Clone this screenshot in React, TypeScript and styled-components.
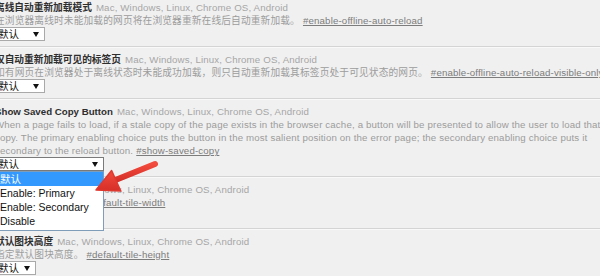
import React from "react";
import styled, { createGlobalStyle } from "styled-components";

const Global = createGlobalStyle`
  html, body { margin: 0; padding: 0; background: #f0f0f0; overflow: hidden; }
  body { width: 600px; height: 276px; }
`;

const Page = styled.div`
  position: relative;
  width: 700px;
  margin: -5px 0 0 -5px;
  font-family: "Liberation Sans", "Noto Sans CJK SC", sans-serif;
  font-size: 9.7px;
  letter-spacing: 0.15px;
  color: #333;
`;

const Experiment = styled.div`
  position: relative;
  padding: 6px 0 5px;
  border-bottom: 1px solid #d4d4d4;
  box-shadow: 0 1px 0 #f9f9f9;
`;

const Line = styled.div`
  line-height: 13px;
  height: 13px;
  white-space: nowrap;
`;

const Name = styled.span`
  font-weight: bold;
  letter-spacing: 0;
  color: #2e2e2e;
`;

const Platforms = styled.span`
  color: #a6a6a6;
  margin-left: 4px;
`;

const Desc = styled(Line)`
  color: #9c9c9c;
`;

const Link = styled.a`
  color: #7c7c7c;
  text-decoration: underline;
  margin-left: 3px;
`;

const SelectBox = styled.div<{ $w: number; $open?: boolean }>`
  box-sizing: border-box;
  width: ${(p) => p.$w}px;
  height: 14px;
  display: flex;
  align-items: center;
  justify-content: space-between;
  padding: 0 5px 0 2px;
  background: #fff;
  border: 1px solid ${(p) => (p.$open ? "#7a7a7a" : "#a9a9a9")};
  font-size: 10.5px;
  letter-spacing: 0;
  color: #111;
  line-height: 12px;
`;

const Arrow = () => (
  <svg width="6" height="5" viewBox="0 0 6 5">
    <polygon points="0,0 6,0 3,5" fill="#111" />
  </svg>
);

const Control = styled.div`
  position: relative;
`;

const OptionList = styled.div`
  position: absolute;
  left: 0;
  top: 14px;
  z-index: 5;
  box-sizing: border-box;
  width: 109px;
  padding-bottom: 2px;
  background: #fff;
  border: 1px solid #7f9db9;
  font-size: 10.5px;
  letter-spacing: 0;
`;

const Option = styled.div<{ $active?: boolean }>`
  height: 14px;
  line-height: 14px;
  padding-left: 4px;
  white-space: nowrap;
  background: ${(p) => (p.$active ? "#3399ff" : "transparent")};
  color: ${(p) => (p.$active ? "#fff" : "#111")};
`;

const Pointer = styled.svg`
  position: absolute;
  left: 0;
  top: 0;
  z-index: 6;
  pointer-events: none;
`;

const PLATFORMS = "Mac, Windows, Linux, Chrome OS, Android";

const Select = ({ w }: { w: number }) => (
  <SelectBox $w={w}>
    <span>默认</span>
    <Arrow />
  </SelectBox>
);

export default function App() {
  return (
    <>
      <Global />
      <Page>
        <Experiment>
          <Line>
            <Name>离线自动重新加载模式</Name>
            <Platforms>{PLATFORMS}</Platforms>
          </Line>
          <Desc>
            在浏览器离线时未能加载的网页将在浏览器重新在线后自动重新加载。
            <Link>#enable-offline-auto-reload</Link>
          </Desc>
          <Select w={50} />
        </Experiment>
        <Experiment>
          <Line>
            <Name>仅自动重新加载可见的标签页</Name>
            <Platforms>{PLATFORMS}</Platforms>
          </Line>
          <Desc>
            如有网页在浏览器处于离线状态时未能成功加载，则只自动重新加载其标签页处于可见状态的网页。
            <Link>#enable-offline-auto-reload-visible-only</Link>
          </Desc>
          <Select w={50} />
        </Experiment>
        <Experiment>
          <Line>
            <Name>Show Saved Copy Button</Name>
            <Platforms>{PLATFORMS}</Platforms>
          </Line>
          <Desc>
            When a page fails to load, if a stale copy of the page exists in the browser cache, a button will be presented to allow the user to load that stale
          </Desc>
          <Desc>
            copy. The primary enabling choice puts the button in the most salient position on the error page; the secondary enabling choice puts it
          </Desc>
          <Desc>
            secondary to the reload button.
            <Link>#show-saved-copy</Link>
          </Desc>
          <Control>
            <SelectBox $w={109} $open>
              <span>默认</span>
              <Arrow />
            </SelectBox>
            <OptionList>
              <Option $active>默认</Option>
              <Option>Enable: Primary</Option>
              <Option>Enable: Secondary</Option>
              <Option>Disable</Option>
            </OptionList>
          </Control>
        </Experiment>
        <Experiment>
          <Line>
            <Name>默认图块宽度</Name>
            <Platforms>{PLATFORMS}</Platforms>
          </Line>
          <Desc>
            指定默认图块宽度。
            <Link>#default-tile-width</Link>
          </Desc>
          <Select w={41} />
        </Experiment>
        <Experiment>
          <Line>
            <Name>默认图块高度</Name>
            <Platforms>{PLATFORMS}</Platforms>
          </Line>
          <Desc>
            指定默认图块高度。
            <Link>#default-tile-height</Link>
          </Desc>
          <Select w={41} />
        </Experiment>
        <Pointer width="200" height="240" viewBox="0 0 200 240">
          <defs>
            <linearGradient id="ar" x1="0" y1="0" x2="0" y2="1">
              <stop offset="0" stopColor="#f24a3c" />
              <stop offset="1" stopColor="#d62f28" />
            </linearGradient>
          </defs>
          <line x1="160" y1="169" x2="118" y2="186" stroke="url(#ar)" strokeWidth="6" strokeLinecap="round" />
          <polygon points="101,195 116.6,175.5 125.8,196" fill="url(#ar)" stroke="#df382f" strokeWidth="1.5" strokeLinejoin="round" />
        </Pointer>
      </Page>
    </>
  );
}
